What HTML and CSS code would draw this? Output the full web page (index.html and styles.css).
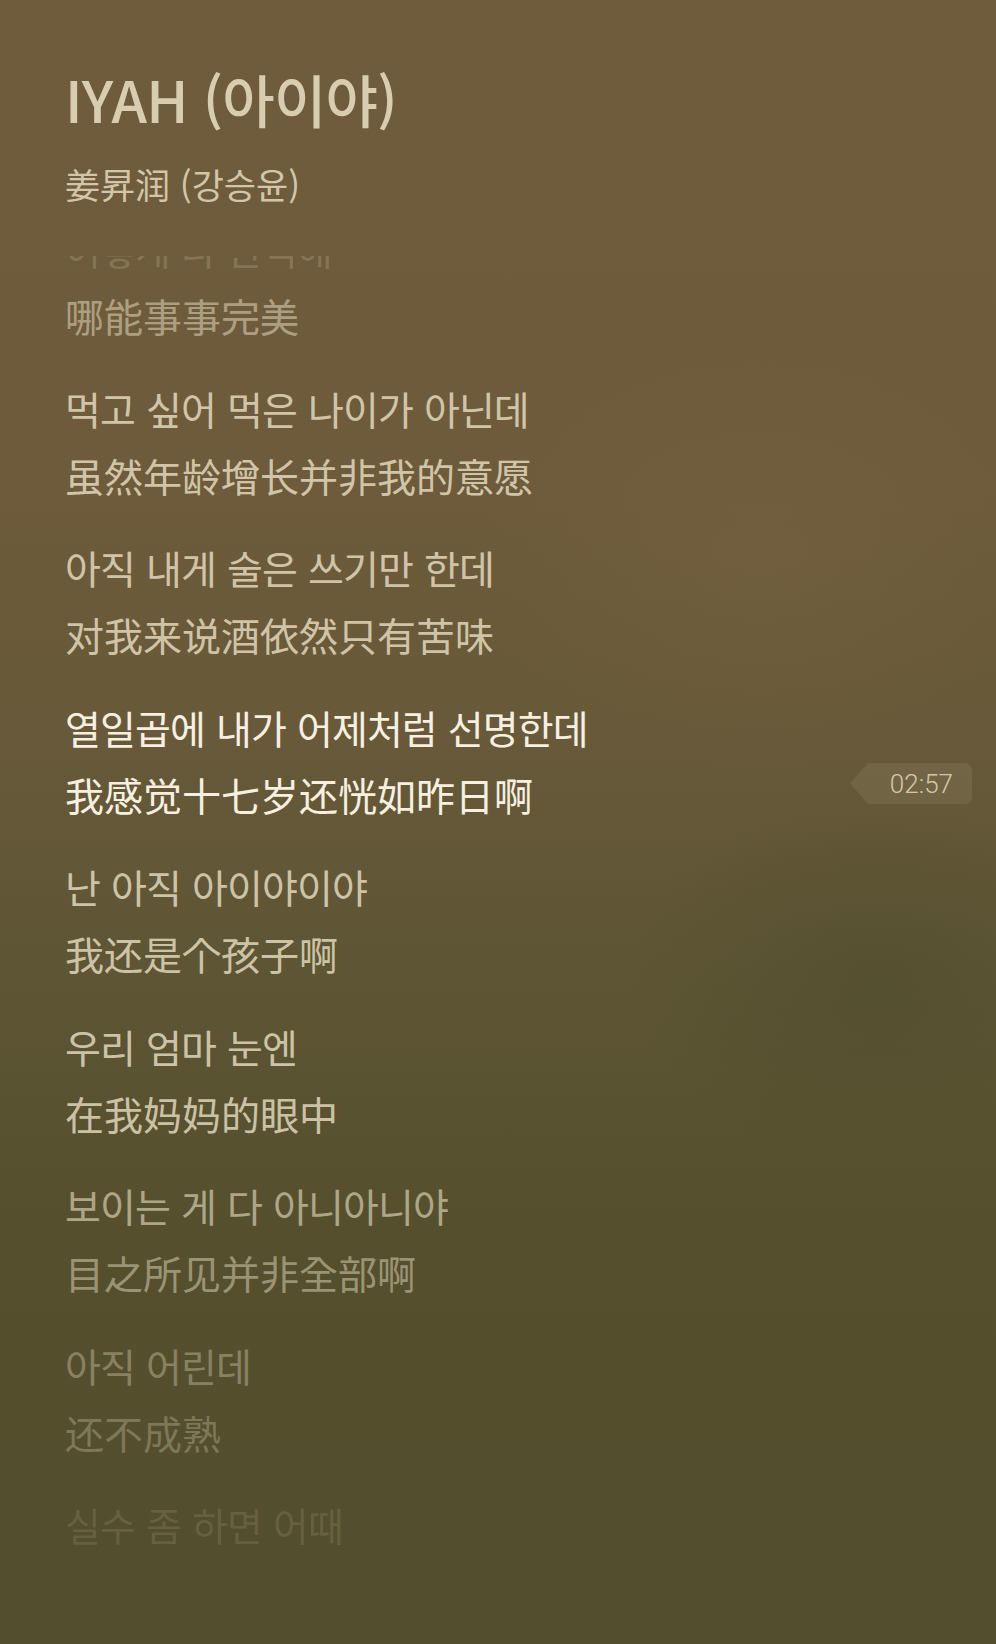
FILE: index.html
```html
<!DOCTYPE html>
<html lang="ko">
<head>
<meta charset="utf-8">
<title>IYAH (아이야)</title>
<link rel="stylesheet" href="styles.css">
</head>
<body>
<main class="player">
  <header class="song">
    <h1 class="song-title">IYAH (아이야)</h1>
    <p class="song-artist">姜昇润 (강승윤)</p>
  </header>
  <section class="lyrics">
    <div class="lyrics-track">
      <div class="pair fade-4">
        <p class="ko">어떻게 다 완벽해</p>
        <p class="zh">哪能事事完美</p>
      </div>
      <div class="pair">
        <p class="ko">먹고 싶어 먹은 나이가 아닌데</p>
        <p class="zh">虽然年龄增长并非我的意愿</p>
      </div>
      <div class="pair">
        <p class="ko">아직 내게 술은 쓰기만 한데</p>
        <p class="zh">对我来说酒依然只有苦味</p>
      </div>
      <div class="pair active">
        <p class="ko">열일곱에 내가 어제처럼 선명한데</p>
        <p class="zh">我感觉十七岁还恍如昨日啊</p>
      </div>
      <div class="pair">
        <p class="ko">난 아직 아이야이야</p>
        <p class="zh">我还是个孩子啊</p>
      </div>
      <div class="pair">
        <p class="ko">우리 엄마 눈엔</p>
        <p class="zh">在我妈妈的眼中</p>
      </div>
      <div class="pair fade-1">
        <p class="ko">보이는 게 다 아니아니야</p>
        <p class="zh">目之所见并非全部啊</p>
      </div>
      <div class="pair fade-2">
        <p class="ko">아직 어린데</p>
        <p class="zh">还不成熟</p>
      </div>
      <div class="pair fade-3">
        <p class="ko">실수 좀 하면 어때</p>
        <p class="zh">犯点错又如何</p>
      </div>
    </div>
    <div class="time-tag"><span class="time-text">02:57</span></div>
  </section>
</main>
</body>
</html>
```

FILE: styles.css
```css
html, body {
  margin: 0;
  padding: 0;
}

body {
  width: 996px;
  height: 1644px;
  overflow: hidden;
  background:
    radial-gradient(ellipse 420px 300px at 760px 560px, rgba(120, 100, 68, 0.35), rgba(120, 100, 68, 0) 70%),
    radial-gradient(ellipse 360px 260px at 880px 980px, rgba(70, 70, 40, 0.35), rgba(70, 70, 40, 0) 70%),
    linear-gradient(180deg, #6e5c3c 0%, #6d5b3b 30%, #675939 45%, #5d5534 60%, #554f2e 75%, #534e2d 100%);
  font-family: "Noto Sans CJK SC", "Noto Sans CJK KR", sans-serif;
  color: #e9dfc6;
}

.player {
  padding: 63px 0 0 65px;
}

.song-title {
  margin: 0;
  font-family: "Noto Sans CJK KR", sans-serif;
  font-size: 57px;
  line-height: 70px;
  font-weight: 500;
  color: #d9cdb1;
  letter-spacing: -0.8px;
}

.song-artist {
  margin: 31px 0 0;
  font-size: 35px;
  line-height: 40px;
  font-weight: 400;
  color: #d3c6a8;
}

.lyrics {
  position: relative;
  margin-top: 52px;
  height: 1388px;
  overflow: hidden;
}

.lyrics-track {
  margin-top: -41px;
  display: flex;
  flex-direction: column;
  gap: 25.5px;
}

.pair p {
  margin: 0;
  font-size: 39px;
  line-height: 67px;
  white-space: nowrap;
  color: rgba(236, 226, 200, 0.8);
}

.pair .ko {
  font-family: "Noto Sans CJK KR", sans-serif;
  letter-spacing: -0.9px;
  word-spacing: 1px;
}

.pair .zh {
  font-family: "Noto Sans CJK SC", sans-serif;
}

.pair.active p {
  color: #f7f0e0;
}

.pair.fade-4 .ko { color: rgba(236, 226, 200, 0.2); }
.pair.fade-4 .zh { color: rgba(236, 226, 200, 0.52); }

.pair.fade-1 .ko { color: rgba(236, 226, 200, 0.6); }
.pair.fade-1 .zh { color: rgba(236, 226, 200, 0.48); }

.pair.fade-2 .ko { color: rgba(236, 226, 200, 0.36); }
.pair.fade-2 .zh { color: rgba(236, 226, 200, 0.28); }

.pair.fade-3 .ko { color: rgba(236, 226, 200, 0.13); }
.pair.fade-3 .zh { color: rgba(236, 226, 200, 0.0); }

.time-tag {
  position: absolute;
  left: 785px;
  top: 507px;
  width: 122px;
  height: 41px;
  background: rgba(255, 246, 220, 0.08);
  clip-path: polygon(18px 0, 100% 0, 100% 100%, 18px 100%, 0 50%);
  border-radius: 0 7px 7px 0;
  display: flex;
  align-items: center;
  justify-content: flex-end;
  padding-right: 19px;
  box-sizing: border-box;
}

.time-text {
  font-family: Roboto, "Noto Sans", sans-serif;
  font-weight: 300;
  font-size: 26px;
  line-height: 1;
  color: rgba(236, 226, 200, 0.8);
}
```
